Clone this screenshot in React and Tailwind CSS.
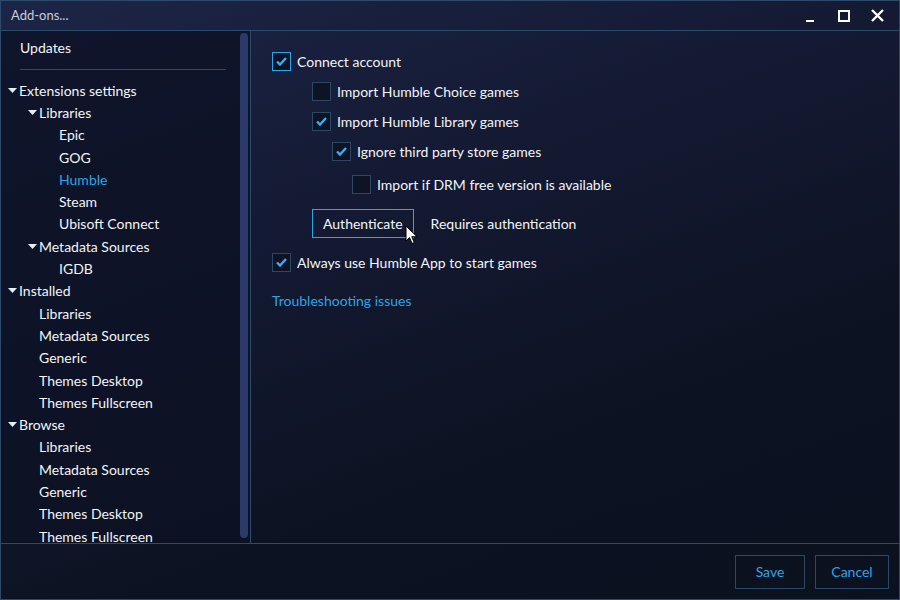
import React from 'react';

const font = { fontFamily: 'Lato, "Open Sans", sans-serif' };

const Caret = () => (
  <svg width="9" height="5" viewBox="0 0 9 5" className="shrink-0">
    <path d="M0 0h9L4.5 5z" fill="#e8ecf4" />
  </svg>
);

const Tree = ({ items }) => (
  <div className="flex flex-col">
    {items.map((it, i) => (
      <div
        key={i}
        className={`flex h-[22.3px] items-center ${it.active ? 'text-[#2ea3e6]' : 'text-[#f2f4f8]'}`}
        style={{ paddingLeft: it.level * 20 + (it.caret ? 7 : 18) }}
      >
        {it.caret && <Caret />}
        <span className={it.caret ? 'ml-[2px]' : ''}>{it.label}</span>
      </div>
    ))}
  </div>
);

const Check = ({ checked, focus }) => (
  <div
    className={`flex h-[19px] w-[19px] shrink-0 items-center justify-center border ${
      focus ? 'border-[#2aa6e8]' : 'border-[#2b4965]'
    } bg-[#0e1426]`}
  >
    {checked && (
      <svg width="11" height="9" viewBox="0 0 11 9">
        <path d="M1 4.5l3 3L10 1" stroke="#3aaef0" strokeWidth="2.4" fill="none" />
      </svg>
    )}
  </div>
);

const Row = ({ indent, checked, focus, label }) => (
  <div className="flex items-center" style={{ paddingLeft: indent }}>
    <Check checked={checked} focus={focus} />
    <span className="ml-[6px]">{label}</span>
  </div>
);

const treeItems = [
  { label: 'Extensions settings', level: 0, caret: true },
  { label: 'Libraries', level: 1, caret: true },
  { label: 'Epic', level: 2 },
  { label: 'GOG', level: 2 },
  { label: 'Humble', level: 2, active: true },
  { label: 'Steam', level: 2 },
  { label: 'Ubisoft Connect', level: 2 },
  { label: 'Metadata Sources', level: 1, caret: true },
  { label: 'IGDB', level: 2 },
  { label: 'Installed', level: 0, caret: true },
  { label: 'Libraries', level: 1 },
  { label: 'Metadata Sources', level: 1 },
  { label: 'Generic', level: 1 },
  { label: 'Themes Desktop', level: 1 },
  { label: 'Themes Fullscreen', level: 1 },
  { label: 'Browse', level: 0, caret: true },
  { label: 'Libraries', level: 1 },
  { label: 'Metadata Sources', level: 1 },
  { label: 'Generic', level: 1 },
  { label: 'Themes Desktop', level: 1 },
  { label: 'Themes Fullscreen', level: 1 },
];

export default function App() {
  return (
    <div
      className="flex h-[600px] w-[900px] flex-col overflow-hidden border border-[#2c4a6a] bg-[linear-gradient(160deg,#1d2547_0%,#141a33_35%,#0d1222_70%,#0c1120_100%)] text-[14px] text-[#f2f4f8]"
      style={font}
    >
      {/* Title bar */}
      <div className="flex h-[30px] shrink-0 items-center border-b border-[#2c4a6a] pl-[10px]">
        <span className="text-[13px] text-[#c9cdd8]">Add-ons...</span>
        <div className="ml-auto flex items-center">
          <div className="mt-[10px] h-[2px] w-[8px] bg-white" />
          <div className="ml-[24px] h-[12px] w-[12px] border-2 border-white" />
          <svg width="13" height="13" viewBox="0 0 13 13" className="ml-[21px] mr-[15px]">
            <path d="M1 1l11 11M12 1L1 12" stroke="#fff" strokeWidth="2.4" />
          </svg>
        </div>
      </div>

      {/* Body */}
      <div className="flex min-h-0 flex-1 border-b border-[#2c4a6a]">
        {/* Sidebar */}
        <div className="relative flex w-[250px] shrink-0 border-r border-[#2c4a6a] bg-[#0d1224]/80">
          <div className="flex-1 overflow-hidden pt-[4px]">
            <div className="flex h-[24px] items-center pl-[19px]">Updates</div>
            <div className="ml-[19px] mr-[24px] mt-[10px] mb-[9px] h-px bg-[#2c4a6a]" />
            <Tree items={treeItems} />
          </div>
          <div className="absolute right-[2px] top-[2px] h-[505px] w-[8px] rounded-[4px] bg-[#2b3a6b]" />
        </div>

        {/* Content */}
        <div className="relative flex flex-1 flex-col pl-[21px] pt-[20px]">
          <div className="flex flex-col gap-[9px]">
            <Row indent={0} checked focus label="Connect account" />
            <Row indent={40} label="Import Humble Choice games" />
            <Row indent={40} checked label="Import Humble Library games" />
            <Row indent={60} checked label="Ignore third party store games" />
          </div>
          <div className="mt-[12px]">
            <Row indent={80} label="Import if DRM free version is available" />
          </div>
          <div className="mt-[14px] flex items-center pl-[40px]">
            <div className="flex h-[29px] items-center border border-[#2aa6e8] px-[10px]">Authenticate</div>
            <span className="ml-[17px]">Requires authentication</span>
          </div>
          <div className="mt-[14px]">
            <Row indent={0} checked label="Always use Humble App to start games" />
          </div>
          <div className="mt-[17px] text-[#2ea3e6]">Troubleshooting issues</div>

          <svg width="13" height="20" viewBox="0 0 13 20" className="absolute left-[154px] top-[194px]">
            <path d="M1 1v15l3.5-3.5 2.5 6 2.3-1-2.5-5.8H12z" fill="#fff" stroke="#000" strokeWidth="1" />
          </svg>
        </div>
      </div>

      {/* Footer */}
      <div className="flex h-[55px] shrink-0 items-center justify-end gap-[10px] pr-[10px]">
        <div className="flex h-[34px] w-[70px] items-center justify-center border border-[#2b4965] text-[#2ea3e6]">Save</div>
        <div className="flex h-[34px] w-[74px] items-center justify-center border border-[#2b4965] text-[#2ea3e6]">Cancel</div>
      </div>
    </div>
  );
}
